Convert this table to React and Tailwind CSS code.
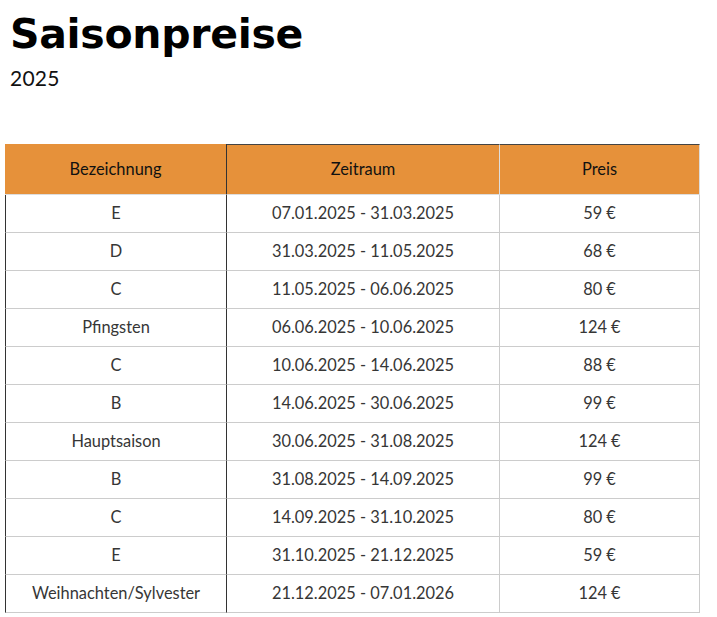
import React from 'react';

const rows = [
  ['E', '07.01.2025 - 31.03.2025', '59 €'],
  ['D', '31.03.2025 - 11.05.2025', '68 €'],
  ['C', '11.05.2025 - 06.06.2025', '80 €'],
  ['Pfingsten', '06.06.2025 - 10.06.2025', '124 €'],
  ['C', '10.06.2025 - 14.06.2025', '88 €'],
  ['B', '14.06.2025 - 30.06.2025', '99 €'],
  ['Hauptsaison', '30.06.2025 - 31.08.2025', '124 €'],
  ['B', '31.08.2025 - 14.09.2025', '99 €'],
  ['C', '14.09.2025 - 31.10.2025', '80 €'],
  ['E', '31.10.2025 - 21.12.2025', '59 €'],
  ['Weihnachten/Sylvester', '21.12.2025 - 07.01.2026', '124 €'],
];

const App = () => {
  return (
    <div className="bg-white min-h-[617px] w-[717px] font-['Lato',sans-serif]">
      <div className="px-[10px] pt-[10px]">
        <h1 className="font-['DejaVu_Sans',sans-serif] text-[41px] leading-[48px] font-bold text-black tracking-[-0.3px]">Saisonpreise</h1>
        <p className="text-[21px] leading-[24px] text-[#111] mt-[8px] tracking-[0.2px]">2025</p>
      </div>

      <table className="ml-[5px] mt-[54px] w-[695px] table-fixed border-separate border-spacing-0 text-[16.4px] text-center">
        <colgroup>
          <col className="w-[222px]" />
          <col className="w-[273px]" />
          <col className="w-[200px]" />
        </colgroup>
        <thead>
          <tr className="bg-[#e6913a] text-[#111] h-[51px]">
            <th className="font-normal border-r border-r-[#333] border-b border-b-[#ddd]">Bezeichnung</th>
            <th className="font-normal border-t border-t-[#444] border-r border-r-[#ddd] border-b border-b-[#ddd]">Zeitraum</th>
            <th className="font-normal border-t border-t-[#444] border-r border-r-[#ddd] border-b border-b-[#ddd]">Preis</th>
          </tr>
        </thead>
        <tbody className="text-[#363636]">
          {rows.map((r, i) => (
            <tr key={i} className="h-[38px]">
              <td className="border-l border-l-[#333] border-r border-r-[#333] border-b border-b-[#ccc]">{r[0]}</td>
              <td className="border-r border-r-[#ccc] border-b border-b-[#ccc]">{r[1]}</td>
              <td className="border-r border-r-[#ccc] border-b border-b-[#ccc]">{r[2]}</td>
            </tr>
          ))}
        </tbody>
      </table>
    </div>
  );
};

export default App;
